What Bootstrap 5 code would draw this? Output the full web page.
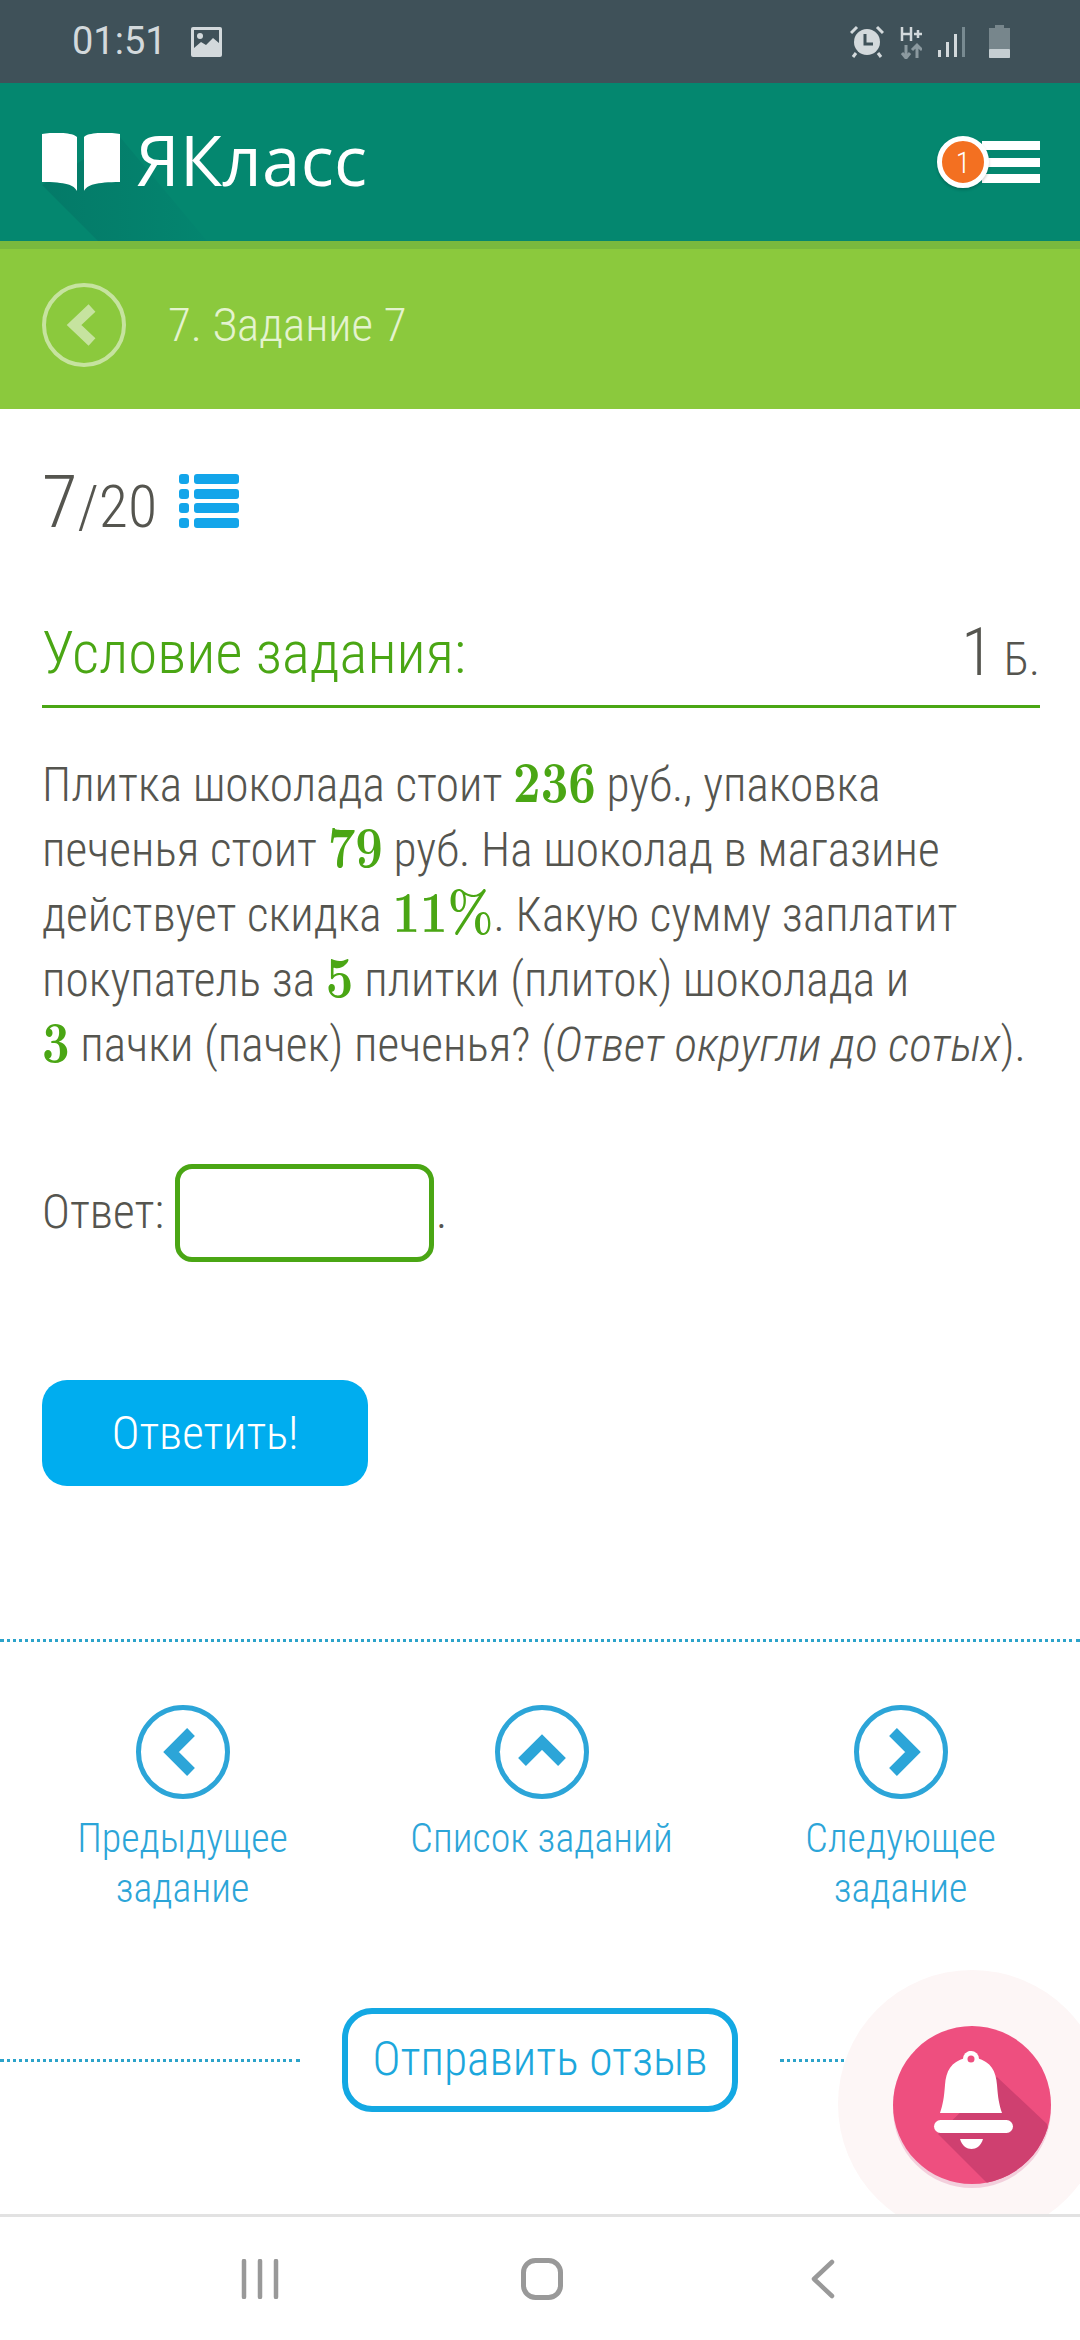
<!DOCTYPE html>
<html lang="ru">

<head>
    <meta charset="UTF-8" />
    <meta name="viewport" content="width=device-width, initial-scale=1" />
    <title>ЯКласс</title>
    <link href="https://cdn.jsdelivr.net/npm/bootstrap@5.3.3/dist/css/bootstrap.min.css" rel="stylesheet"
        crossorigin="anonymous">
    <style>
        body {
            width: 1080px;
            height: 2340px;
            overflow: hidden;
            background: #fff;
            font-family: "Roboto Condensed", Roboto, "Liberation Sans", sans-serif;
            font-weight: 300;
            color: #55554f;
        }

        .status-bar {
            height: 83px;
            background: #3f5159;
            color: #d3d9dc;
            padding: 0 70px 0 72px;
            font-family: Roboto, sans-serif;
            font-size: 38px;
            font-weight: 400;
        }

        .top-bar {
            height: 158px;
            background: #04876f;
            padding: 0 40px 0 42px;
            overflow: hidden;
        }

        .logo-shade {
            left: 0;
            top: 0;
        }

        .logo-text {
            color: #fff;
            font-family: "Open Sans", sans-serif;
            font-size: 69px;
            font-weight: 400;
            letter-spacing: .3px;
            line-height: 1;
            margin-top: -6px;
        }

        .menu-wrap {
            width: 105px;
            height: 42px;
        }

        .menu-line {
            height: 9px;
            width: 58px;
            background: #fff;
        }

        .count-dot {
            left: 2px;
            top: -5px;
            width: 52px;
            height: 52px;
            background: #f37021;
            border: 5px solid #fff;
            color: #fff;
            font-size: 30px;
            box-shadow: 0 2px 3px rgba(0, 0, 0, .2);
        }

        .sub-bar {
            height: 168px;
            background: #8bc93d;
            border-top: 8px solid #79b93e;
            padding: 0 42px 8px;
            gap: 42px;
            color: #e4f3cf;
            font-size: 47px;
        }

        .page-body {
            padding: 0 40px 0 42px;
        }

        .counter {
            margin-top: 59px;
            height: 66px;
            line-height: 66px;
        }

        .counter-text {
            margin-top: 22px;
        }

        .counter-big {
            font-size: 73px;
        }

        .counter-small {
            font-size: 60px;
        }

        .list-icon {
            margin-left: 22px;
        }

        .task-head {
            margin-top: 88px;
            height: 86px;
            border-bottom: 3px solid #4aa614;
            color: #4aa614;
            font-size: 59px;
            line-height: 62px;
        }

        .task-score {
            color: #55554f;
            font-size: 46px;
        }

        .task-score b {
            font-weight: 300;
            font-size: 66px;
        }

        .task-text {
            margin-top: 45px;
            font-size: 47.4px;
            line-height: 65px;
        }

        .task-text b {
            display: inline-block;
            color: #4aa614;
            font-family: "Latin Modern Roman", "CMU Serif", "Liberation Serif", serif;
            font-weight: 700;
            font-size: 48px;
            line-height: 1;
            transform: scaleY(1.2);
            transform-origin: 50% 78%;
        }

        .answer-row {
            margin-top: 86px;
            font-size: 47.4px;
            gap: 11px;
        }

        .answer-input {
            width: 259px;
            height: 98px;
            border: 5px solid #4aa614;
            border-radius: 17px;
            box-shadow: none;
        }

        .answer-dot {
            margin-left: -9px;
        }

        .answer-btn {
            width: 326px;
            height: 106px;
            margin-top: 118px;
            background: #00adef;
            border: 0;
            border-radius: 25px;
            color: #fff;
            font-size: 47px;
            font-weight: 300;
        }

        .dots {
            border-top: 3px dotted #2ca3ca;
        }

        .tasks-nav {
            margin-top: 153px;
            padding-top: 63px;
            padding-left: 3px;
            height: 369px;
        }

        .nav-item-link {
            width: 359px;
            color: #2ca5d8;
            font-size: 40px;
            line-height: 50px;
            text-decoration: none;
        }

        .nav-item-link svg {
            display: block;
            margin: 0 auto 15px;
        }

        .feedback-row {
            height: 104px;
            gap: 42px;
        }

        .feedback-btn {
            width: 396px;
            height: 104px;
            border: 6px solid #13a8e3;
            border-radius: 30px;
            background: #fff;
            color: #1ca7dc;
            font-size: 47.5px;
            font-weight: 300;
            padding: 0;
        }

        .halo-clip {
            left: 838px;
            top: 1970px;
            width: 242px;
            height: 244px;
            overflow: hidden;
        }

        .bell-halo {
            width: 268px;
            height: 268px;
            background: #fdf6f6;
        }

        .bell-btn {
            left: 892px;
            top: 2026px;
        }

        .android-nav {
            left: 0;
            right: 0;
            top: 2214px;
            height: 126px;
            padding-left: 3px;
            background: #fff;
            border-top: 3px solid #e2e2e2;
        }

        .soft-key {
            width: 281px;
        }
    </style>
</head>

<body class="position-relative">

    <!-- STATUS BAR -->
    <div class="status-bar d-flex align-items-center">
        <span>01:51</span>
        <svg class="ms-4" width="31" height="30" viewBox="0 0 31 30">
            <rect width="31" height="30" rx="2" fill="#d3d9dc" />
            <rect x="3" y="3" width="25" height="24" fill="#3f5159" />
            <path d="M3 21 10 15 15 18 22 11 28 16V27H3Z" fill="#d3d9dc" />
            <circle cx="9" cy="9" r="3" fill="#d3d9dc" />
        </svg>
        <div class="ms-auto d-flex align-items-center">
            <svg width="34" height="33" viewBox="0 0 34 33">
                <circle cx="17" cy="17" r="13" fill="#d3d9dc" />
                <path d="M15 9V19H23" fill="none" stroke="#3f5159" stroke-width="3" />
                <path d="M1 8 7 2M33 8 27 2M6 28 3 32M28 28 31 32" stroke="#d3d9dc" stroke-width="3" />
            </svg>
            <svg class="ms-3" width="22" height="34" viewBox="0 0 22 34">
                <path d="M2 2V16M11 2V16M2 9H11M14 9H22M18 5V13" stroke="#d3d9dc" stroke-width="2.5" fill="none" />
                <path d="M6 20V32M2 28 6 33 10 28" stroke="#8b999f" stroke-width="3" fill="none" />
                <path d="M17 33V21M12 25 17 20 22 25" stroke="#8b999f" stroke-width="3" fill="none" />
            </svg>
            <svg class="ms-3" width="27" height="30" viewBox="0 0 27 30">
                <rect x="0" y="23" width="3" height="7" fill="#d3d9dc" />
                <rect x="8" y="15" width="3" height="15" fill="#d3d9dc" />
                <rect x="16" y="7" width="3" height="23" fill="#d3d9dc" />
                <rect x="24" y="0" width="3" height="30" fill="#788a91" />
            </svg>
            <svg class="ms-4" width="21" height="33" viewBox="0 0 21 33">
                <path d="M6 0H15V3H21V33H0V3H6Z" fill="#77868c" />
                <rect y="24" width="21" height="9" rx="1" fill="#c5ced2" />
            </svg>
        </div>
    </div>

    <!-- CABEÇALHO -->
    <nav class="top-bar d-flex align-items-center justify-content-between position-relative">
        <svg class="logo-shade position-absolute" width="260" height="158" viewBox="0 0 260 158">
            <defs>
                <linearGradient id="logoShade" x1="0" y1="0" x2="1" y2="0">
                    <stop offset="0" stop-color="#047a68" />
                    <stop offset="1" stop-color="#04856f" />
                </linearGradient>
            </defs>
            <path d="M42 102 98 158H207L120 54Z" fill="url(#logoShade)" />
        </svg>
        <div class="d-flex align-items-center gap-3 position-relative">
            <svg width="78" height="58" viewBox="0 0 78 58">
                <path d="M0 1C10-1 30-1 35 4V58C32 52 24 49 0 49Z" fill="#fff" />
                <path d="M78 1C68-1 46-1 42 4V58C45 52 54 49 78 49Z" fill="#fff" />
            </svg>
            <span class="logo-text">ЯКласс</span>
        </div>
        <div class="menu-wrap position-relative d-flex flex-column justify-content-between align-items-end">
            <div class="menu-line"></div>
            <div class="menu-line"></div>
            <div class="menu-line"></div>
            <span class="count-dot position-absolute rounded-circle d-flex align-items-center justify-content-center">1</span>
        </div>
    </nav>

    <!-- VOLTAR -->
    <div class="sub-bar d-flex align-items-center">
        <svg width="84" height="84" viewBox="0 0 84 84">
            <circle cx="42" cy="42" r="40" fill="none" stroke="#c6e39f" stroke-width="4" />
            <path d="M50 25 32 42 50 59" fill="none" stroke="#c6e39f" stroke-width="10" />
        </svg>
        <span>7. Задание 7</span>
    </div>

    <!-- CORPO -->
    <div class="page-body">
        <div class="counter d-flex align-items-center">
            <span class="counter-text"><span class="counter-big">7</span><span class="counter-small">/20</span></span>
            <svg class="list-icon" width="60" height="55" viewBox="0 0 60 55">
                <g fill="#13a5ea">
                    <rect x="0" y="0" width="10" height="10" rx="3" />
                    <rect x="15" y="0" width="45" height="10" rx="3" />
                    <rect x="0" y="15" width="10" height="10" rx="3" />
                    <rect x="15" y="15" width="45" height="10" rx="3" />
                    <rect x="0" y="29" width="10" height="10" rx="3" />
                    <rect x="15" y="29" width="45" height="10" rx="3" />
                    <rect x="0" y="44" width="10" height="10" rx="3" />
                    <rect x="15" y="44" width="45" height="10" rx="3" />
                </g>
            </svg>
        </div>

        <div class="task-head d-flex justify-content-between">
            <span>Условие задания:</span>
            <span class="task-score"><b>1</b> Б.</span>
        </div>

        <div class="task-text">
            Плитка шоколада стоит <b>236</b> руб., упаковка<br>
            печенья стоит <b>79</b> руб. На шоколад в магазине<br>
            действует скидка <b>11%</b>. Какую сумму заплатит<br>
            покупатель за <b>5</b> плитки (плиток) шоколада и<br>
            <b>3</b> пачки (пачек) печенья? (<i>Ответ округли до сотых</i>).
        </div>

        <div class="answer-row d-flex align-items-center">
            <span>Ответ:</span>
            <input type="text" class="form-control answer-input" aria-label="Ответ">
            <span class="answer-dot">.</span>
        </div>

        <button type="button" class="btn answer-btn d-block">Ответить!</button>
    </div>

    <!-- NAVEGAÇÃO -->
    <div class="tasks-nav dots d-flex justify-content-center align-items-start text-center">
        <a class="nav-item-link" href="#">
            <svg width="94" height="94" viewBox="0 0 94 94">
                <circle cx="47" cy="47" r="44.5" fill="none" stroke="#2ca5d8" stroke-width="5" />
                <path d="M55 27 35 47 55 67" fill="none" stroke="#2ca5d8" stroke-width="11" />
            </svg>
            Предыдущее<br>задание
        </a>
        <a class="nav-item-link" href="#">
            <svg width="94" height="94" viewBox="0 0 94 94">
                <circle cx="47" cy="47" r="44.5" fill="none" stroke="#2ca5d8" stroke-width="5" />
                <path d="M27 57 47 37 67 57" fill="none" stroke="#2ca5d8" stroke-width="11" />
            </svg>
            Список заданий
        </a>
        <a class="nav-item-link" href="#">
            <svg width="94" height="94" viewBox="0 0 94 94">
                <circle cx="47" cy="47" r="44.5" fill="none" stroke="#2ca5d8" stroke-width="5" />
                <path d="M39 27 59 47 39 67" fill="none" stroke="#2ca5d8" stroke-width="11" />
            </svg>
            Следующее<br>задание
        </a>
    </div>

    <div class="feedback-row d-flex align-items-center">
        <div class="dots flex-grow-1"></div>
        <button type="button" class="btn feedback-btn flex-shrink-0">Отправить отзыв</button>
        <div class="dots flex-grow-1"></div>
    </div>

    <!-- SINO -->
    <div class="halo-clip position-absolute">
        <div class="bell-halo rounded-circle"></div>
    </div>
    <svg class="bell-btn position-absolute" width="160" height="164" viewBox="0 0 160 164">
        <defs>
            <clipPath id="bellClip">
                <circle cx="80" cy="79" r="79" />
            </clipPath>
        </defs>
        <circle cx="80" cy="83" r="79" fill="#f3cfdc" />
        <circle cx="80" cy="79" r="79" fill="#ee4f7f" />
        <path clip-path="url(#bellClip)" d="M105 51 155 98 170 170 95 157 46 108Z" fill="#cf4070" />
        <path d="M79 25a8 8 0 0 1 8 7c14 4 19 13 20 27 1 13 2 19 5 28H50c3-9 4-15 5-28 1-14 6-23 20-27Z" transform="translate(-2 0)" fill="#fff" />
        <path d="M71 33a8 8 0 1 1 16 0Z" fill="#fff" />
        <circle cx="79" cy="33" r="3.5" fill="#ee4f7f" />
        <rect x="42" y="94" width="79" height="13" rx="6.5" fill="#fff" />
        <path d="M68 113H91C89 120 84 123 79.5 123S70 120 68 113Z" fill="#fff" />
    </svg>

    <!-- BARRA ANDROID -->
    <div class="android-nav position-absolute d-flex justify-content-center align-items-center">
        <div class="soft-key text-center">
            <svg width="40" height="40" viewBox="0 0 40 40">
                <path d="M3 2V38M19 2V38M35 2V38" stroke="#999" stroke-width="4.5" stroke-linecap="round" />
            </svg>
        </div>
        <div class="soft-key text-center">
            <svg width="42" height="42" viewBox="0 0 42 42">
                <rect x="2.5" y="2.5" width="37" height="37" rx="12" fill="none" stroke="#999" stroke-width="5" />
            </svg>
        </div>
        <div class="soft-key text-center">
            <svg width="24" height="40" viewBox="0 0 24 40">
                <path d="M21 3 3 20 21 37" fill="none" stroke="#999" stroke-width="4.5" stroke-linecap="round" stroke-linejoin="round" />
            </svg>
        </div>
    </div>

    <script src="https://cdn.jsdelivr.net/npm/bootstrap@5.3.3/dist/js/bootstrap.bundle.min.js"
        crossorigin="anonymous"></script>
</body>

</html>
